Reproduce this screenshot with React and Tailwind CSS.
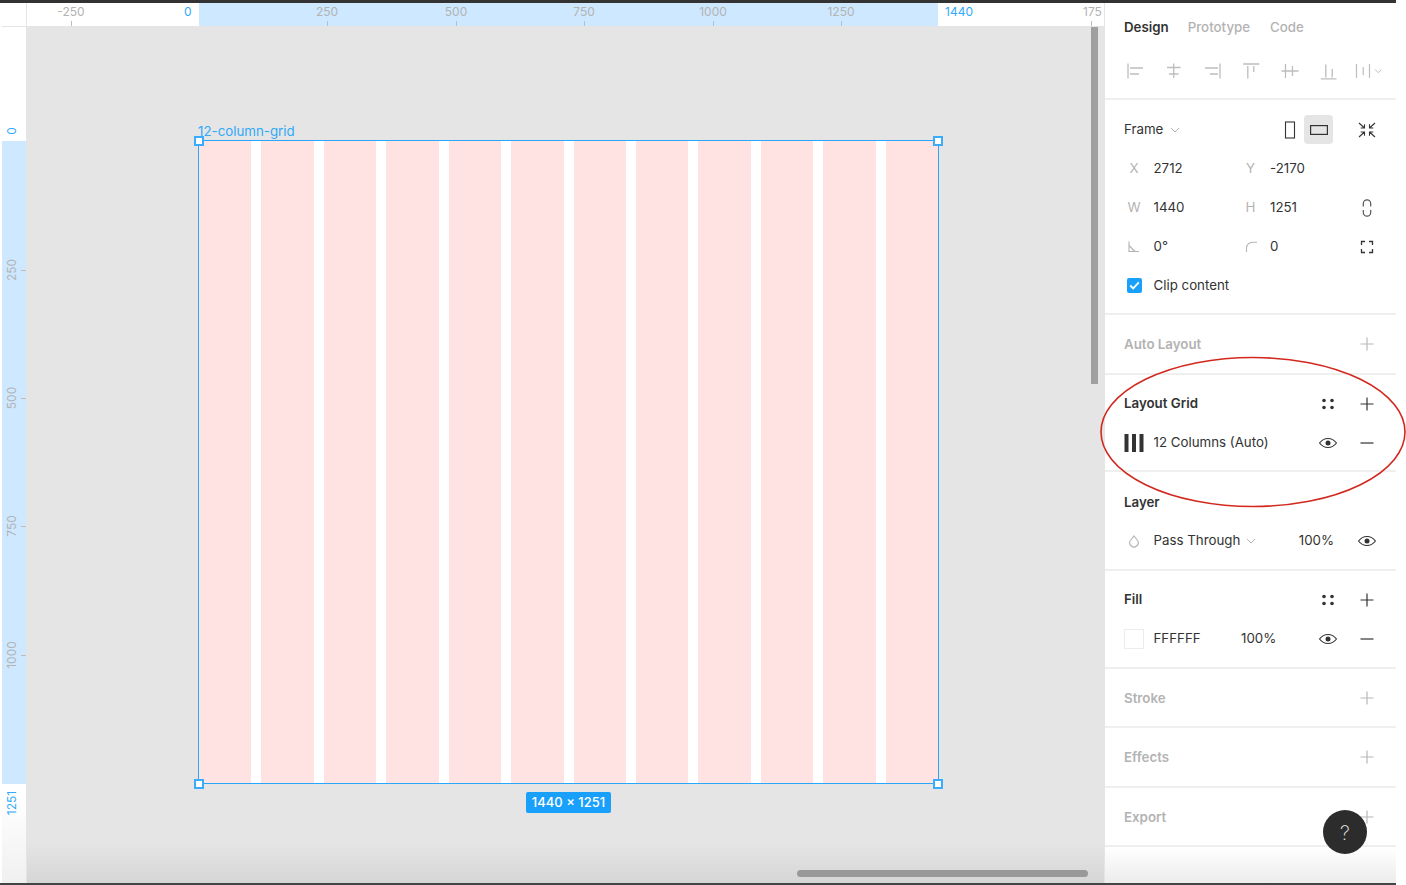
const grey = '#b3b3b3';
const dark = '#333333';

function Icon({ children, size = 20, color = dark, width = 1.2, className = '' }) {
  return (
    <svg width={size} height={size} viewBox="0 0 20 20" fill="none" stroke={color} strokeWidth={width} className={className}>
      {children}
    </svg>
  );
}

function Cell({ children, className = '' }) {
  return <div className={`w-[39px] h-full flex items-center justify-center shrink-0 ${className}`}>{children}</div>;
}

const Plus = ({ color = dark }) => (
  <Icon color={color}>
    <path d="M10 3.5V16.5M3.5 10H16.5" />
  </Icon>
);
const Minus = () => (
  <Icon>
    <path d="M3.5 10H16.5" />
  </Icon>
);
const Dots = () => (
  <svg width="20" height="20" viewBox="0 0 20 20" fill={dark}>
    <circle cx="6" cy="6.5" r="1.8" />
    <circle cx="14" cy="6.5" r="1.8" />
    <circle cx="6" cy="13.5" r="1.8" />
    <circle cx="14" cy="13.5" r="1.8" />
  </svg>
);
const Eye = () => (
  <Icon width={1.1}>
    <path d="M1.5 10C3.8 7 6.6 5.5 10 5.5S16.2 7 18.5 10C16.2 13 13.4 14.5 10 14.5S3.8 13 1.5 10Z" />
    <circle cx="10" cy="10" r="2.5" fill={dark} stroke="none" />
  </Icon>
);
const Chevron = ({ className = '' }) => (
  <svg width="10" height="6" viewBox="0 0 10 6" fill="none" stroke={grey} strokeWidth="1" className={className}>
    <path d="M1 1L5 5L9 1" />
  </svg>
);

const alignIcons = [
  <path key="a" d="M3 2.5V17.5M5 7H18M5 13H14" />,
  <path key="b" d="M9.7 2.5V17M3 6.5H16.5M5 13H14.5" />,
  <path key="c" d="M17 2.5V17.5M2 7H15M7 13H15" />,
  <path key="d" d="M1.2 3H17.2M5.8 5V17.5M11.8 5V11" />,
  <path key="e" d="M0.5 10H17.5M4.5 3V17M11.5 5V15" />,
  <path key="f" d="M0.8 17.8H16.5M5.8 3.5V16.5M12.2 8V16.5" />,
];

function SectionHead({ title, muted, nudge, h = 'h-[39px]', children }) {
  return (
    <div className={`${h} flex items-center pl-[19px] pr-[10px]`}>
      <span className={`flex-1 font-semibold ${muted ? 'text-[#b3b3b3]' : 'text-[#333333]'} ${nudge ? 'pt-[2px]' : muted ? 'pt-[1px]' : ''}`}>{title}</span>
      {children}
    </div>
  );
}

function EmptySection({ title, h, nudge }) {
  return (
    <section className={`${h} border-b-2 border-[#efefef]`}>
      <SectionHead title={title} muted nudge={nudge} h="h-full">
        <Cell>
          <Plus color="#b8b8b8" />
        </Cell>
      </SectionHead>
    </section>
  );
}

function FieldRow({ a, av, b, bv, icon, aIcon, bIcon }) {
  return (
    <div className="h-[39px] flex items-center pl-[9.5px] pr-[10px]">
      <Cell className="text-[#b3b3b3]">{aIcon || a}</Cell>
      <span className="w-[78.5px] text-[#333333]">{av}</span>
      <Cell className="text-[#b3b3b3]">{bIcon || b}</Cell>
      <span className="w-[78px] text-[#333333]">{bv}</span>
      <Cell>{icon}</Cell>
    </div>
  );
}

function Panel() {
  return (
    <aside className="w-[291px] shrink-0 h-full bg-white flex flex-col text-[13.3px] leading-none">
      <section className="h-[97px] border-b-2 border-[#efefef]">
        <div className="h-[48px] flex items-center gap-[19px] pl-[19px] pt-[1px]">
          <span className="font-semibold text-[#333333]">Design</span>
          <span className="font-medium text-[#b3b3b3]">Prototype</span>
          <span className="font-medium text-[#b3b3b3] ml-px">Code</span>
        </div>
        <div className="h-[39px] flex items-center pl-[10px]">
          {alignIcons.map((p, i) => (
            <Cell key={i}>
              <Icon color="#bdbdbd" width={1.3}>{p}</Icon>
            </Cell>
          ))}
          <Cell>
            <svg width="28" height="20" viewBox="0 0 28 20" fill="none" stroke="#bdbdbd" strokeWidth="1.2">
              <path d="M1.5 3V17M8.2 6V14M14.5 3V17" />
              <path d="M20 8.5L23.2 11.7L26.5 8.5" strokeWidth="1" />
            </svg>
          </Cell>
        </div>
      </section>

      <section className="h-[215px] pt-[10px] border-b-2 border-[#efefef]">
        <div className="h-[39px] flex items-center pl-[19px] pr-[10px]">
          <span className="text-[#333333]">Frame</span>
          <Chevron className="ml-[7px]" />
          <div className="ml-auto flex items-center h-full">
            <Icon size={20} width={1.1} className="mr-[4px]">
              <rect x="5.5" y="2" width="9" height="16" />
            </Icon>
            <div className="w-[29px] h-[29px] rounded-sm bg-[#e5e5e5] flex items-center justify-center">
              <svg width="18" height="10" viewBox="0 0 18 10" fill="none" stroke={dark} strokeWidth="1.2">
                <rect x="0.6" y="0.6" width="16.8" height="8.8" />
              </svg>
            </div>
            <Cell className="ml-[14px]">
              <Icon width={1.1}>
                <path d="M2 3L7.5 8M7.5 4.2V8H3.7M18 3L12.5 8M12.5 4.2V8H16.3M2 17L7.5 12M7.5 15.8V12H3.7M18 17L12.5 12M12.5 15.8V12H16.3" />
              </Icon>
            </Cell>
          </div>
        </div>
        <FieldRow a="X" av="2712" b="Y" bv="-2170" />
        <FieldRow
          a="W"
          av="1440"
          b="H"
          bv="1251"
          icon={
            <Icon width={1.2} color="#555555">
              <path d="M6.3 8.5V5.5A3.7 3.7 0 0 1 13.7 5.5V8.5M6.3 12V14.5A3.7 3.7 0 0 0 13.7 14.5V12" />
            </Icon>
          }
        />
        <FieldRow
          aIcon={
            <Icon color="#b3b3b3" width={1.1}>
              <path d="M5 4.5V14.5H15M5 8.5L11 14.5" />
            </Icon>
          }
          av="0°"
          bIcon={
            <Icon color="#b3b3b3" width={1.1}>
              <path d="M5.5 15V11.2A6 6 0 0 1 11.5 5.2H16" />
            </Icon>
          }
          bv="0"
          icon={
            <Icon width={1.3}>
              <path d="M4.5 8V4.5H8M12 4.5H15.5V8M15.5 12V15.5H12M8 15.5H4.5V12" />
            </Icon>
          }
        />
        <div className="h-[39px] flex items-center pl-[9.5px]">
          <Cell>
            <div className="w-[15px] h-[15px] rounded-[2px] bg-[#18a0fb] flex items-center justify-center">
              <svg width="11" height="9" viewBox="0 0 11 9" fill="none" stroke="white" strokeWidth="1.8">
                <path d="M1.2 4.5L4.2 7.4L9.8 1.4" />
              </svg>
            </div>
          </Cell>
          <span className="text-[#333333]">Clip content</span>
        </div>
      </section>

      <EmptySection title="Auto Layout" h="h-[60px]" />

      <section className="h-[97px] pt-[9px] border-b-2 border-[#efefef]">
        <SectionHead title="Layout Grid">
          <Cell><Dots /></Cell>
          <Cell><Plus /></Cell>
        </SectionHead>
        <div className="h-[39px] flex items-center pl-[9.5px] pr-[10px]">
          <Cell>
            <svg width="20" height="20" viewBox="0 0 20 20" fill={dark}>
              <rect x="0.5" y="1" width="4" height="18" />
              <rect x="8" y="1" width="4" height="18" />
              <rect x="15.5" y="1" width="4" height="18" />
            </svg>
          </Cell>
          <span className="flex-1 text-[#333333]">12 Columns (Auto)</span>
          <Cell><Eye /></Cell>
          <Cell><Minus /></Cell>
        </div>
      </section>

      <section className="h-[99px] pt-[11px] border-b-2 border-[#efefef]">
        <SectionHead title="Layer" />
        <div className="h-[38px] flex items-center pl-[9.5px] pr-[10px]">
          <Cell>
            <Icon color="#b3b3b3" width={1.1}>
              <path d="M10 5L13.2 9A4.2 4.2 0 1 1 6.8 9Z" />
            </Icon>
          </Cell>
          <span className="text-[#333333]">Pass Through</span>
          <Chevron className="ml-[6px]" />
          <span className="ml-auto mr-[13px] text-[#333333]">100%</span>
          <Cell><Eye /></Cell>
        </div>
      </section>

      <section className="h-[98px] pt-[9px] border-b-2 border-[#efefef]">
        <SectionHead title="Fill">
          <Cell><Dots /></Cell>
          <Cell><Plus /></Cell>
        </SectionHead>
        <div className="h-[39px] flex items-center pl-[9.5px] pr-[10px]">
          <Cell>
            <div className="w-[20px] h-[20px] bg-white border border-[#ececec]" />
          </Cell>
          <span className="w-[87.5px] text-[#333333]">FFFFFF</span>
          <span className="flex-1 text-[#333333]">100%</span>
          <Cell><Eye /></Cell>
          <Cell><Minus /></Cell>
        </div>
      </section>

      <EmptySection title="Stroke" h="h-[59px]" nudge />
      <EmptySection title="Effects" h="h-[60px]" />
      <EmptySection title="Export" h="h-[59px]" nudge />
      <div className="flex-1 bg-gradient-to-b from-white to-[#ececec]" />
    </aside>
  );
}

const topLabels = [
  { x: 71, t: '-250' },
  { x: 327, t: '250' },
  { x: 456, t: '500' },
  { x: 584, t: '750' },
  { x: 713, t: '1000' },
  { x: 841, t: '1250' },
];
const sideLabels = [
  { y: 270, t: '250' },
  { y: 398, t: '500' },
  { y: 526, t: '750' },
  { y: 655, t: '1000' },
];

function TopRuler() {
  return (
    <div className="relative h-[24px] flex-1 bg-white border-b border-[#e5e5e5] border-r overflow-hidden text-[12px] leading-none">
      <div className="absolute left-[172px] top-0 w-[739px] h-full bg-[#cde8ff]" />
      {topLabels.map((l) => (
        <div key={l.t}>
          <span className="absolute top-[3px] -translate-x-1/2 text-[#b3b3b3]" style={{ left: l.x - 27 }}>{l.t}</span>
          <span className="absolute bottom-0 w-px h-[5px] bg-[#bdbdbd]" style={{ left: l.x - 27 }} />
        </div>
      ))}
      <span className="absolute left-[157px] top-[3px] text-[#30a9fb]">0</span>
      <span className="absolute left-[918px] top-[3px] text-[#30a9fb]">1440</span>
      <span className="absolute left-[1056px] top-[3px] text-[#b3b3b3]">175</span>
      <span className="absolute left-[1064px] bottom-0 w-px h-[5px] bg-[#bdbdbd]" />
    </div>
  );
}

function SideRuler() {
  return (
    <div className="relative w-[25px] h-full bg-gradient-to-b from-white from-90% to-[#f0f0f0] border-r border-[#e5e5e5] overflow-hidden text-[12px] leading-none">
      <div className="absolute top-[114px] left-0 w-full h-[643px] bg-[#cde8ff]" />
      {sideLabels.map((l) => (
        <div key={l.t}>
          <span className="absolute left-[10px] -translate-x-1/2 -translate-y-1/2 -rotate-90 text-[#b3b3b3]" style={{ top: l.y - 27 }}>{l.t}</span>
          <span className="absolute right-0 h-px w-[5px] bg-[#bdbdbd]" style={{ top: l.y - 27 }} />
        </div>
      ))}
      <span className="absolute left-[10px] top-[104px] -translate-x-1/2 -translate-y-1/2 -rotate-90 text-[#30a9fb]">0</span>
      <span className="absolute left-[10px] top-[776px] -translate-x-1/2 -translate-y-1/2 -rotate-90 text-[#30a9fb]">1251</span>
    </div>
  );
}

function Handle({ className }) {
  return <div className={`absolute w-[10px] h-[10px] bg-white border-2 border-[#3aacfb] ${className}`} />;
}

function Frame() {
  const cols = Array.from({ length: 12 });
  return (
    <div className="absolute left-[171px] top-[113px] w-[741px] h-[644px] border border-[#2aa7fb] bg-white">
      <span className="absolute left-[-1px] top-[-16px] text-[13.3px] leading-none whitespace-nowrap text-[#30a9fb]">12-column-grid</span>
      <div className="grid grid-cols-12 gap-x-[10px] h-full">
        {cols.map((_, i) => (
          <div key={i} className="bg-[#ffe3e3]" />
        ))}
      </div>
      <Handle className="left-[-5px] top-[-5px]" />
      <Handle className="right-[-5px] top-[-5px]" />
      <Handle className="left-[-5px] bottom-[-6px]" />
      <Handle className="right-[-5px] bottom-[-6px]" />
      <div className="absolute left-[327px] top-[651px] w-[85px] h-[21px] rounded-[2px] bg-[#18a0fb] text-white text-[13px] leading-none font-medium flex items-center justify-center whitespace-nowrap">
        1440 × 1251
      </div>
    </div>
  );
}

export default function App() {
  return (
    <div className="relative w-[1406px] h-[885px] overflow-hidden bg-white" style={{ fontFamily: 'Inter, "Liberation Sans", sans-serif' }}>
      <div className="w-[1396px] h-[885px] flex flex-col">
        <div className="h-[3px] shrink-0 bg-[#333333]" />
        <div className="flex-1 min-h-0 flex">
          <div className="flex-1 min-w-0 flex flex-col">
            <div className="flex h-[24px] shrink-0 pl-[2px]">
              <div className="w-[25px] border-r border-b border-[#e5e5e5] bg-white" />
              <TopRuler />
            </div>
            <div className="flex-1 min-h-0 flex pl-[2px]">
              <SideRuler />
              <div className="relative flex-1 bg-[#e5e5e5] border-r border-[#e5e5e5] overflow-hidden">
                <div className="absolute inset-x-0 bottom-0 h-[40px] bg-gradient-to-b from-[#e5e5e5] to-[#d6d6d6]" />
                <Frame />
                <div className="absolute left-[1064px] top-0 w-[7px] h-[357px] bg-[#a0a0a0]" />
                <div className="absolute left-[770px] top-[843px] w-[291px] h-[7px] rounded-full bg-[#999999]" />
              </div>
            </div>
          </div>
          <Panel />
        </div>
        <div className="h-[2px] shrink-0 bg-[#444444]" />
      </div>

      <svg className="absolute left-[1100px] top-[356px] pointer-events-none" width="306" height="152" viewBox="0 0 306 152" fill="none">
        <ellipse cx="153" cy="76" rx="152" ry="74.5" stroke="#d2281e" strokeWidth="1.6" />
      </svg>

      <div className="absolute left-[1323px] top-[810px] w-[44px] h-[44px] pt-[1px] rounded-full bg-[#2c2c2c] flex items-center justify-center text-[#eeeeee] text-[20px] font-extralight leading-none">
        ?
      </div>
    </div>
  );
}
